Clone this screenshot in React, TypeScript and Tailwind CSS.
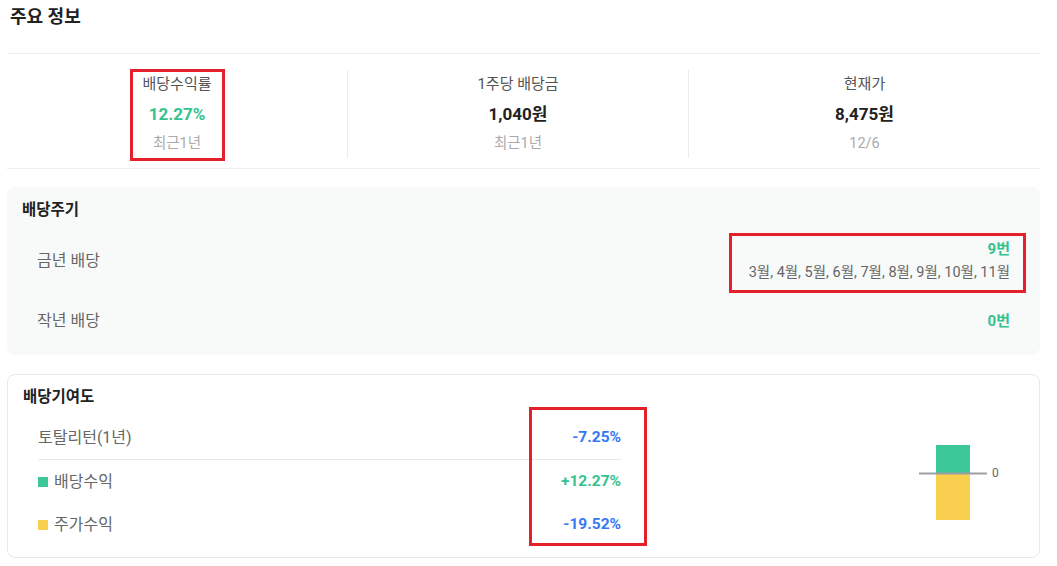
const font = "font-['Roboto','Noto_Sans_CJK_KR',sans-serif]";

function Stat({ label, value, sub, first, valueClass }: { label: string; value: string; sub: string; first?: boolean; valueClass: string }) {
  return (
    <div className={`flex flex-col items-center ${first ? "" : "border-l border-[#ececec]"}`}>
      <div className="text-[15px] leading-[29px] text-[#555]">{label}</div>
      <div className={`text-[17px] leading-[30px] font-bold ${valueClass}`}>{value}</div>
      <div className="text-[14.5px] leading-[29px] text-[#aaa]">{sub}</div>
    </div>
  );
}

function ContribRow({ label, value, color, swatch }: { label: string; value: string; color: string; swatch?: string }) {
  return (
    <div className="flex items-center justify-between h-[43px]">
      <div className="flex items-center gap-[6px] text-[16px] text-[#666]">
        {swatch && <span className={`w-[10px] h-[10px] ${swatch}`} />}
        <span>{label}</span>
      </div>
      <div className={`text-[15.5px] font-bold ${color}`}>{value}</div>
    </div>
  );
}

export default function App() {
  return (
    <div className={`relative w-[1057px] h-[566px] bg-white ${font}`}>
      <div className="h-[53px] px-[10px] pt-[4px]">
        <h2 className="text-[18px] leading-[26px] font-bold text-[#222]">주요 정보</h2>
      </div>

      <div className="mx-[7px] w-[1033px] border-y border-[#ececec] grid grid-cols-[340px_341px_1fr] pt-[16px] pb-[10px]">
        <Stat first label="배당수익률" value="12.27%" sub="최근1년" valueClass="text-[#34c28f]" />
        <Stat label="1주당 배당금" value="1,040원" sub="최근1년" valueClass="text-[#222]" />
        <Stat label="현재가" value="8,475원" sub="12/6" valueClass="text-[#222]" />
      </div>

      <div className="mx-[7px] mt-[18px] w-[1033px] h-[168px] rounded-[8px] bg-[#f8fafa] px-[15px] pt-[13px]">
        <h3 className="text-[15.5px] leading-[20px] font-bold text-[#222]">배당주기</h3>
        <div className="flex items-center justify-between h-[60px] px-[15px] mt-[11px]">
          <span className="text-[16px] text-[#666]">금년 배당</span>
          <div className="flex flex-col items-end">
            <span className="text-[15px] leading-[23px] font-bold text-[#34c28f]">9번</span>
            <span className="text-[14.5px] leading-[23px] text-[#666]">3월, 4월, 5월, 6월, 7월, 8월, 9월, 10월, 11월</span>
          </div>
        </div>
        <div className="flex items-center justify-between h-[60px] px-[15px]">
          <span className="text-[16px] text-[#666]">작년 배당</span>
          <span className="text-[15px] font-bold text-[#34c28f]">0번</span>
        </div>
      </div>

      <div className="mx-[7px] mt-[19px] w-[1033px] h-[184px] rounded-[8px] border border-[#e8e8e8] px-[15px] pt-[12px]">
        <h3 className="text-[15.5px] leading-[20px] font-bold text-[#222]">배당기여도</h3>
        <div className="flex items-center">
          <div className="w-[583px] ml-[15px] mt-[9px]">
            <ContribRow label="토탈리턴(1년)" value="-7.25%" color="text-[#3478f6]" />
            <div className="h-px bg-[#e8e8e8]" />
            <ContribRow label="배당수익" value="+12.27%" color="text-[#34c28f]" swatch="bg-[#3dc89a]" />
            <ContribRow label="주가수익" value="-19.52%" color="text-[#3478f6]" swatch="bg-[#f9cf50]" />
          </div>
          <svg className="ml-auto mr-[19px] mt-[10px]" width="90" height="90" viewBox="0 0 90 90">
            <rect x="21" y="8" width="34" height="28" fill="#3dc89a" />
            <rect x="21" y="37" width="34" height="46" fill="#f9cf50" />
            <line x1="4" y1="36.5" x2="72" y2="36.5" stroke="#9ca0a4" strokeWidth="2" />
            <text x="77" y="40" fontSize="12" fill="#666" fontFamily="Roboto, sans-serif">0</text>
          </svg>
        </div>
      </div>

      <div className="absolute left-[130px] top-[69px] w-[95px] h-[92px] border-[3px] border-[#e5202b]" />
      <div className="absolute left-[729px] top-[233px] w-[297px] h-[60px] border-[3px] border-[#e5202b]" />
      <div className="absolute left-[529px] top-[407px] w-[118px] h-[139px] border-[3px] border-[#e5202b]" />
    </div>
  );
}
